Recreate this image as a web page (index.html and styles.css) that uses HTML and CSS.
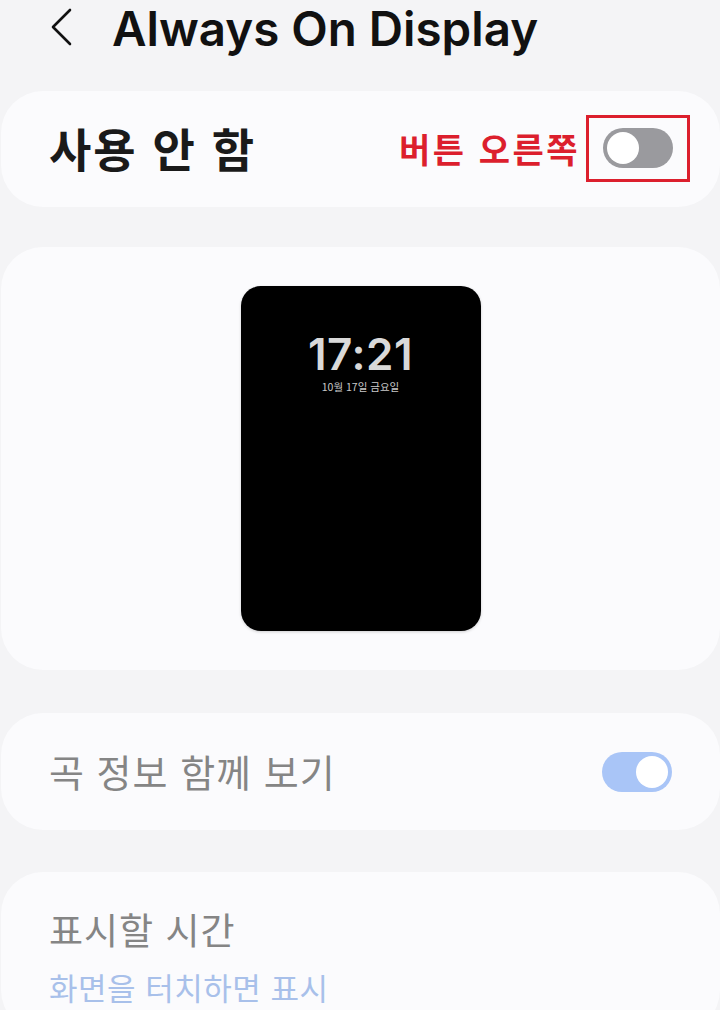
FILE: index.html
```html
<!DOCTYPE html>
<html lang="ko">
<head>
<meta charset="utf-8">
<title>Always On Display</title>
<link rel="stylesheet" href="styles.css">
</head>
<body>
  <header class="topbar">
    <svg class="back" width="24" height="38" viewBox="0 0 24 38" aria-hidden="true">
      <polyline points="20,2 3,19 20,36" fill="none" stroke="#111" stroke-width="2.6" stroke-linecap="round" stroke-linejoin="round"/>
    </svg>
    <h1 class="title">Always On Display</h1>
  </header>

  <section class="card card-main">
    <span class="main-label">사용 안 함</span>
    <div class="main-right">
      <span class="note">버튼 오른쪽</span>
      <span class="highlight">
        <span class="switch switch-off"><span class="knob"></span></span>
      </span>
    </div>
  </section>

  <section class="card card-preview">
    <div class="screen">
      <div class="clock">17:21</div>
      <div class="date">10월 17일 금요일</div>
    </div>
  </section>

  <section class="card card-row">
    <span class="row-label">곡 정보 함께 보기</span>
    <span class="switch switch-on"><span class="knob"></span></span>
  </section>

  <section class="card card-two">
    <span class="row-label">표시할 시간</span>
    <span class="row-sub">화면을 터치하면 표시</span>
  </section>
</body>
</html>
```

FILE: styles.css
```css
html, body {
  margin: 0;
  padding: 0;
}

body {
  background: #f4f4f6;
  width: 720px;
  height: 1010px;
  overflow: hidden;
  font-family: "Noto Sans CJK KR", "Noto Sans", sans-serif;
}

.topbar {
  height: 91px;
  display: flex;
  align-items: flex-start;
  padding: 8px 0 0 50px;
  box-sizing: border-box;
  gap: 38px;
}

.back {
  display: block;
}

.title {
  margin: -9px 0 0;
  font-family: "Inter", "Roboto", sans-serif;
  font-weight: 600;
  font-size: 47.5px;
  letter-spacing: 0;
  color: #111;
  line-height: 60px;
}

.card {
  background: #fbfbfd;
  border-radius: 42px;
  margin: 0 0 0 1px;
  box-sizing: border-box;
}

.card-main {
  height: 116px;
  display: flex;
  align-items: center;
  justify-content: space-between;
  padding: 0 30px 0 48px;
  margin-bottom: 40px;
}

.main-label {
  font-size: 46px;
  font-weight: 700;
  color: #1a1a1a;
  letter-spacing: 2px;
  margin-top: -4px;
}

.main-right {
  display: flex;
  align-items: center;
  gap: 6px;
  margin-top: -2px;
}

.note {
  font-size: 34px;
  font-weight: 700;
  color: #dc1f2d;
  letter-spacing: 2.5px;
}

.highlight {
  display: flex;
  align-items: center;
  justify-content: center;
  width: 104px;
  height: 67px;
  border: 3.5px solid #dc1f2d;
  box-sizing: border-box;
}

.switch {
  position: relative;
  display: block;
  width: 70px;
  height: 40px;
  border-radius: 20px;
  box-sizing: border-box;
}

.knob {
  position: absolute;
  top: 4px;
  width: 32px;
  height: 32px;
  border-radius: 50%;
  background: #fff;
}

.switch-off {
  background: #9a9a9e;
}

.switch-off .knob {
  left: 4px;
}

.switch-on {
  background: #a9c5f7;
}

.switch-on .knob {
  right: 4px;
}

.card-preview {
  height: 423px;
  display: flex;
  justify-content: center;
  padding-top: 39px;
  margin-bottom: 43px;
}

.screen {
  width: 240px;
  height: 345px;
  background: #000;
  border-radius: 20px;
  box-shadow: 0 1px 3px rgba(0, 0, 0, 0.18);
  display: flex;
  flex-direction: column;
  align-items: center;
  padding-top: 44px;
  box-sizing: border-box;
}

.clock {
  font-family: "Inter", "Roboto", sans-serif;
  font-weight: 600;
  font-size: 44px;
  line-height: 48px;
  color: #d9d9d9;
  letter-spacing: 0.5px;
}

.date {
  margin-top: 2px;
  font-size: 10.5px;
  line-height: 14px;
  color: #c9c9c9;
}

.card-row {
  height: 117px;
  display: flex;
  align-items: center;
  justify-content: space-between;
  padding: 0 48px 0 48px;
  margin-bottom: 42px;
}

.row-label {
  font-size: 38px;
  color: #858585;
  letter-spacing: 1px;
  margin-top: -2px;
}

.card-two {
  height: 160px;
  display: flex;
  flex-direction: column;
  padding: 32px 48px 0;
}

.card-two .row-label {
  font-size: 37px;
}

.row-sub {
  font-size: 31px;
  color: #a8c0ea;
  margin-top: 8px;
  letter-spacing: 0.5px;
}
```
